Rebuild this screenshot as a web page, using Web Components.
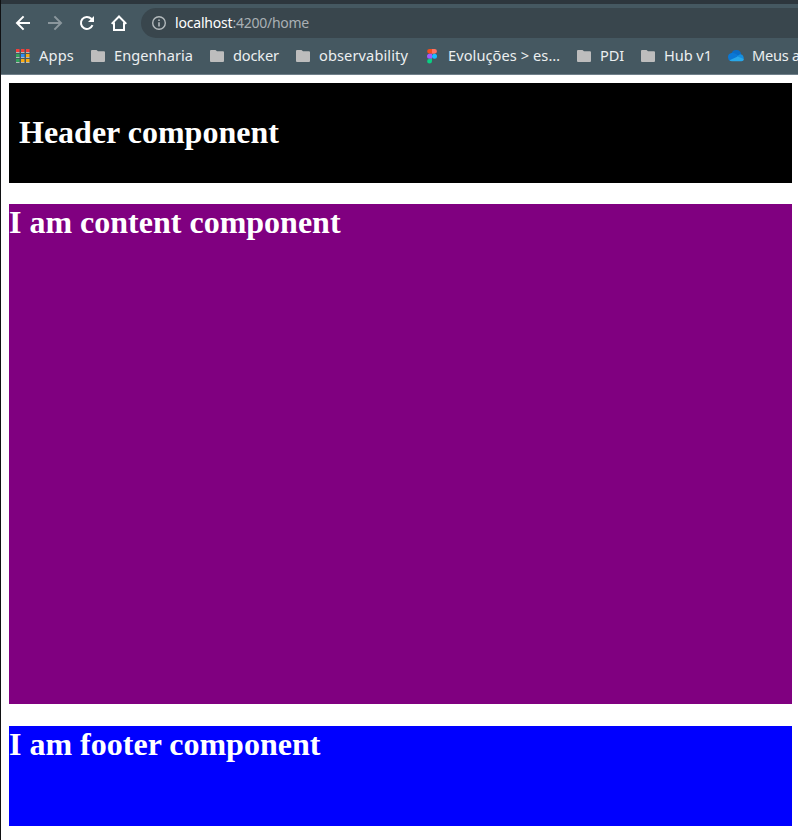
<!DOCTYPE html>
<html lang="en">
<head>
<meta charset="utf-8">
<title>Home</title>
<style>
html,body{margin:0;height:100%;overflow:hidden;background:#fff}
</style>
</head>
<body>
<browser-window>
  <browser-toolbar slot="chrome"></browser-toolbar>
  <bookmarks-bar slot="chrome">
    <bookmark-item icon="apps" width="35">Apps</bookmark-item>
    <bookmark-item icon="folder" width="79">Engenharia</bookmark-item>
    <bookmark-item icon="folder" width="46">docker</bookmark-item>
    <bookmark-item icon="folder" width="89">observability</bookmark-item>
    <bookmark-item icon="figma" width="112">Evoluções &gt; es…</bookmark-item>
    <bookmark-item icon="folder" width="24">PDI</bookmark-item>
    <bookmark-item icon="folder" width="48">Hub v1</bookmark-item>
    <bookmark-item icon="cloud" width="48">Meus a</bookmark-item>
  </bookmarks-bar>
  <page-header>Header component</page-header>
  <page-content>I am content component</page-content>
  <page-footer>I am footer component</page-footer>
</browser-window>
<script>
const define = (name, html, ready) => customElements.define(name, class extends HTMLElement {
  connectedCallback() {
    if (this.shadowRoot) return;
    this.attachShadow({ mode: 'open' }).innerHTML = html;
    if (ready) ready(this);
  }
});

// Labels keep a fixed width; tracking absorbs the difference.
define('fit-text', `<style>
:host{display:block;white-space:nowrap}
span{display:inline-block}
</style><span><slot></slot></span>`, el => {
  const w = parseFloat(el.getAttribute('width'));
  el.style.width = w + 'px';
  const span = el.shadowRoot.querySelector('span');
  const n = [...el.textContent].length;
  span.style.letterSpacing = ((w - span.getBoundingClientRect().width) / n) + 'px';
});

define('browser-window', `<style>
:host{display:flex;flex-direction:column;box-sizing:border-box;height:100vh;border-left:1px solid #101113;background:#fff;overflow:hidden}
main{padding:8px 6px 0 8px}
</style><slot name="chrome"></slot><main><slot></slot></main>`);

define('browser-toolbar', `<style>
:host{display:flex;flex:none;box-sizing:border-box;height:38px;border-top:4px solid #2d363d;background:#455861;padding:4px 0 0 14px;font:14px/30px "Noto Sans",sans-serif}
nav{display:flex;gap:16px;align-items:center;width:126px;flex:none}
svg{display:block;flex:none}
.bar{flex:1;display:flex;align-items:center;background:#39464d;border-radius:15px 0 0 15px;padding-left:10px}
.bar svg{margin-right:8px}
.host{color:#fff}.path{color:#a9b0b4}
</style>
<nav>
<svg width="16" height="16" viewBox="0 0 16 16" fill="none" stroke="#fff" stroke-width="2"><path d="M15 8H2.5M8.6 1.4L2 8l6.600 6.600"/></svg>
<svg width="16" height="16" viewBox="0 0 16 16" fill="none" stroke="#8b979d" stroke-width="2"><path d="M1 8h12.500M7.400 1.400L14 8l-6.600 6.600"/></svg>
<svg width="16" height="16" viewBox="0 0 16 16"><path d="M13.500 10.200A6 6 0 1 1 12.300 3.800L14 5.500" fill="none" stroke="#fff" stroke-width="2"/><path d="M15 1v6H9z" fill="#fff"/></svg>
<svg width="16" height="16" viewBox="0 0 16 16" fill="none" stroke="#fff" stroke-width="2"><path d="M.7 8.900L8 1.500l7.300 7.400M3 7.500V15h10V7.500"/></svg>
</nav>
<div class="bar">
<svg width="16" height="16" viewBox="0 0 16 16"><circle cx="8" cy="8" r="6.300" fill="none" stroke="#b4babd" stroke-width="1.400"/><path d="M7.200 7.200h1.600v4.300H7.200zM7.200 4.400h1.600V6H7.200z" fill="#b4babd"/></svg>
<fit-text class="host" width="57.5">localhost</fit-text><fit-text class="path" width="76.500">:4200/home</fit-text>
</div>`);

define('bookmarks-bar', `<style>
:host{display:flex;flex:none;gap:16px;box-sizing:border-box;height:37px;padding-left:14px;background:#455861;border-bottom:1px solid #70808a;overflow:hidden}
</style><slot></slot>`);

const icons = {
  apps: [[2,'#f1403b','#f1403b','#f1403b'],[7,'#34a45b','#2f8df5','#f9ab10'],[12,'#34a45b','#f9ab10','#f9ab10']]
    .map(([y,...c]) => c.map((f,i) => `<path d="M${1+i*5} ${y-1}h4v3h-4z" fill="${f}"/><path d="M${1+i*5} ${y+2}h4v1h-4z" fill="#b6b9ba"/>`).join('')).join('').replaceAll('h4','h3.500').replaceAll('h-4','h-3.500'),
  folder: '<path d="M2 2h4.500l1.500 1.300H14q1 0 1 1V13q0 1-1 1H2q-1 0-1-1V3q0-1 1-1z" fill="#bdbdbd"/>',
  figma: '<path d="M8 1H5.500a2.350 2.350 0 0 0 0 4.700H8z" fill="#f24e1e"/><path d="M8 1h2.600a2.350 2.350 0 0 1 0 4.700H8z" fill="#ff7262"/><path d="M8 5.700H5.500a2.500 2.500 0 0 0 0 5H8z" fill="#a259ff"/><circle cx="10.500" cy="8.200" r="2.500" fill="#1abcfe"/><path d="M8 10.700H5.500A2.450 2.450 0 1 0 8 13.200z" fill="#0acf83"/>',
  cloud: '<path d="M3.500 5.500A5 5 0 0 1 13.200 6.200L9.500 9z" fill="#0a6cc6"/><path d="M0 9.300Q0 5.600 3.700 5.100 6 4.600 8 6L12 8.800 2.500 13Q0 12.300 0 9.300z" fill="#0a78d6"/><path d="M9 8.300L11.500 6.600Q14.600 5.600 15.600 9L15.600 11.500 9 9z" fill="#148edf"/><path d="M1.500 12.200L9.800 8.400 15.900 11Q15.700 13.200 13.500 13.200H4Q2.200 13.200 1.500 12.200z" fill="#28a8ea"/>'
};

define('bookmark-item', `<style>
:host{display:flex;flex:none;align-items:center;gap:8px;height:36px;color:#eceff0;font:14.600px/20px "Noto Sans",sans-serif}
svg{display:block;flex:none}
#label{padding-bottom:2px}
</style>
<svg width="16" height="16" viewBox="0 0 16 16"></svg><div id="label"></div>`, el => {
  const root = el.shadowRoot;
  root.querySelector('svg').innerHTML = icons[el.getAttribute('icon')];
  const t = document.createElement('fit-text');
  t.setAttribute('width', el.getAttribute('width'));
  t.textContent = el.textContent;
  root.querySelector('#label').append(t);
});

const block = (color, height, extra = '') => `<style>
:host{display:block;box-sizing:border-box;height:${height}px;background:${color};color:#fff;font-family:"Liberation Serif","Times New Roman",serif;${extra}}
h1{margin:0;font-size:32px;line-height:37px;font-weight:bold}
</style><h1><slot></slot></h1>`;
define('page-header', block('#000', 100, 'padding:31px 10px 0'));
define('page-content', block('#800080', 500, 'margin-top:21px'));
define('page-footer', block('#00f', 100, 'margin-top:22px'));
</script>
</body>
</html>
